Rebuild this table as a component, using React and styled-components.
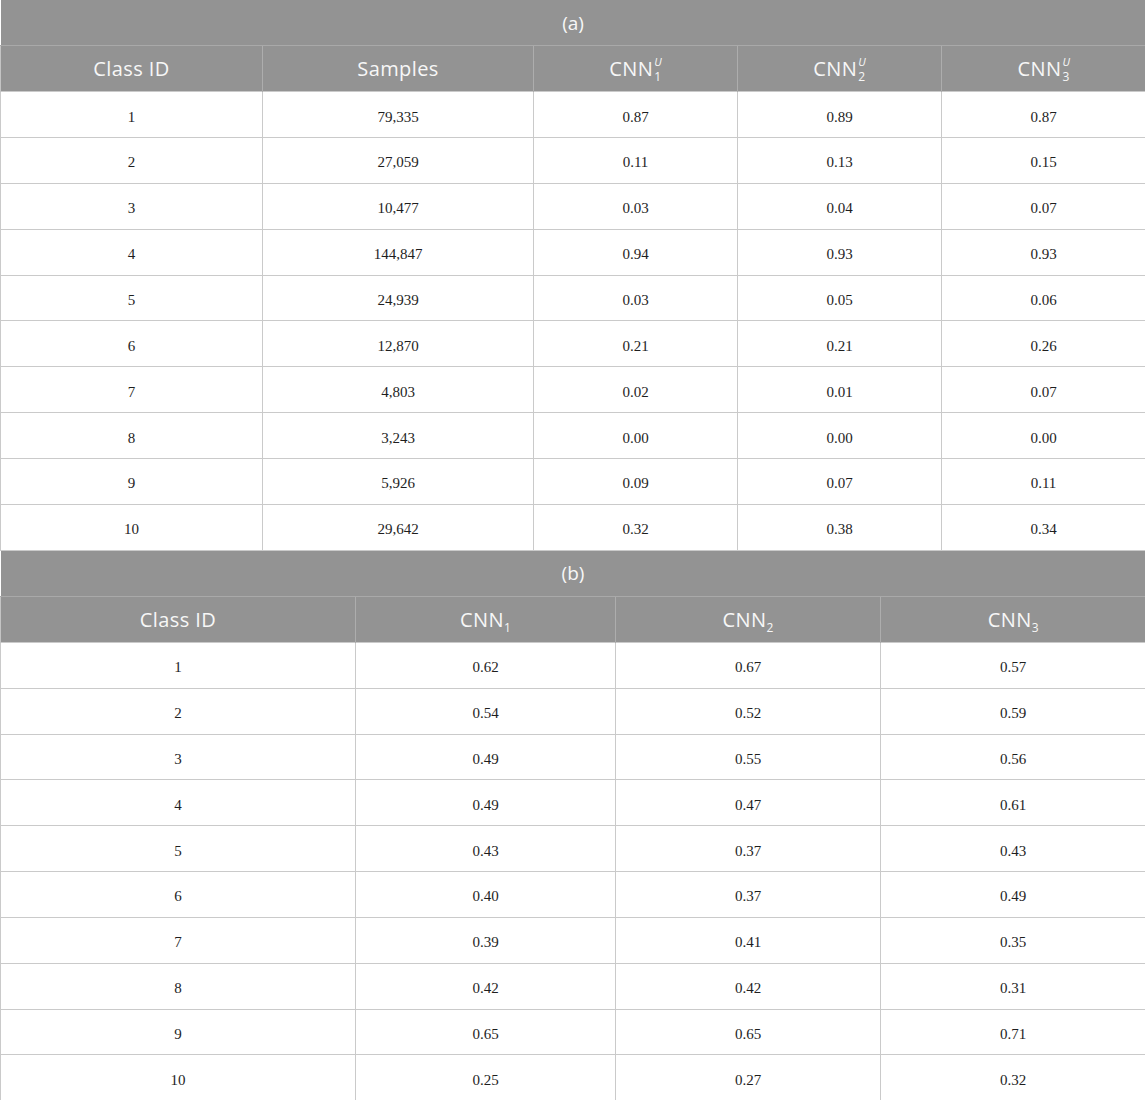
import React from 'react';
import styled, { createGlobalStyle } from 'styled-components';

const GlobalStyle = createGlobalStyle`
  body {
    margin: 0;
    background: #ffffff;
  }
`;

const Page = styled.div`
  width: 1145px;
`;

const Table = styled.table`
  width: 1145px;
  border-collapse: collapse;
  table-layout: fixed;
`;

const CaptionCell = styled.th`
  height: 45.85px;
  box-sizing: border-box;
  padding: 0;
  background: #939393;
  color: #f7f7f7;
  font-family: "Open Sans", "Liberation Sans", sans-serif;
  font-weight: 400;
  font-size: 19px;
  text-align: center;
  border-bottom: 1px solid #a9a9a9;
`;

const HeadCell = styled.th`
  height: 45.85px;
  box-sizing: border-box;
  padding: 0;
  background: #939393;
  color: #f7f7f7;
  font-family: "Open Sans", "Liberation Sans", sans-serif;
  font-weight: 400;
  font-size: 20px;
  letter-spacing: 0.4px;
  text-align: center;
  border-left: 1px solid #adadad;
  &:first-child {
    border-left: 1px solid #c4c4c4;
  }
`;

const Cell = styled.td`
  height: 45.85px;
  box-sizing: border-box;
  padding: 5px 0 0;
  background: #ffffff;
  color: #1e1e1e;
  font-family: "Liberation Serif", "Times New Roman", serif;
  font-size: 15px;
  text-align: center;
  border: 1px solid #cacaca;
`;

const Scripts = styled.span`
  display: inline-flex;
  flex-direction: column;
  align-items: flex-start;
  vertical-align: 10px;
  margin-left: 1px;
  font-size: 12px;
  line-height: 15px;
  letter-spacing: 0;
`;

const Sup = styled.span`
  font-style: italic;
  font-size: 11px;
`;

const Sub = styled.sub`
  font-size: 12px;
  vertical-align: -5px;
  line-height: 0;
  letter-spacing: 0;
`;

const CnnU = ({ n }) => (
  <span>
    CNN
    <Scripts>
      <Sup>U</Sup>
      <span>{n}</span>
    </Scripts>
  </span>
);

const Cnn = ({ n }) => (
  <span>
    CNN<Sub>{n}</Sub>
  </span>
);

const tableA = [
  ['1', '79,335', '0.87', '0.89', '0.87'],
  ['2', '27,059', '0.11', '0.13', '0.15'],
  ['3', '10,477', '0.03', '0.04', '0.07'],
  ['4', '144,847', '0.94', '0.93', '0.93'],
  ['5', '24,939', '0.03', '0.05', '0.06'],
  ['6', '12,870', '0.21', '0.21', '0.26'],
  ['7', '4,803', '0.02', '0.01', '0.07'],
  ['8', '3,243', '0.00', '0.00', '0.00'],
  ['9', '5,926', '0.09', '0.07', '0.11'],
  ['10', '29,642', '0.32', '0.38', '0.34'],
];

const tableB = [
  ['1', '0.62', '0.67', '0.57'],
  ['2', '0.54', '0.52', '0.59'],
  ['3', '0.49', '0.55', '0.56'],
  ['4', '0.49', '0.47', '0.61'],
  ['5', '0.43', '0.37', '0.43'],
  ['6', '0.40', '0.37', '0.49'],
  ['7', '0.39', '0.41', '0.35'],
  ['8', '0.42', '0.42', '0.31'],
  ['9', '0.65', '0.65', '0.71'],
  ['10', '0.25', '0.27', '0.32'],
];

const DataTable = ({ caption, widths, heads, rows }) => (
  <Table>
    <colgroup>
      {widths.map((w, i) => (
        <col key={i} style={{ width: w }} />
      ))}
    </colgroup>
    <thead>
      <tr>
        <CaptionCell colSpan={widths.length}>{caption}</CaptionCell>
      </tr>
      <tr>
        {heads.map((h, i) => (
          <HeadCell key={i}>{h}</HeadCell>
        ))}
      </tr>
    </thead>
    <tbody>
      {rows.map((r, i) => (
        <tr key={i}>
          {r.map((c, j) => (
            <Cell key={j}>{c}</Cell>
          ))}
        </tr>
      ))}
    </tbody>
  </Table>
);

export default function App() {
  return (
    <Page>
      <GlobalStyle />
      <DataTable
        caption="(a)"
        widths={[262, 271, 204, 204, 204]}
        heads={['Class ID', 'Samples', <CnnU n="1" />, <CnnU n="2" />, <CnnU n="3" />]}
        rows={tableA}
      />
      <DataTable
        caption="(b)"
        widths={[355, 260, 265, 265]}
        heads={['Class ID', <Cnn n="1" />, <Cnn n="2" />, <Cnn n="3" />]}
        rows={tableB}
      />
    </Page>
  );
}
